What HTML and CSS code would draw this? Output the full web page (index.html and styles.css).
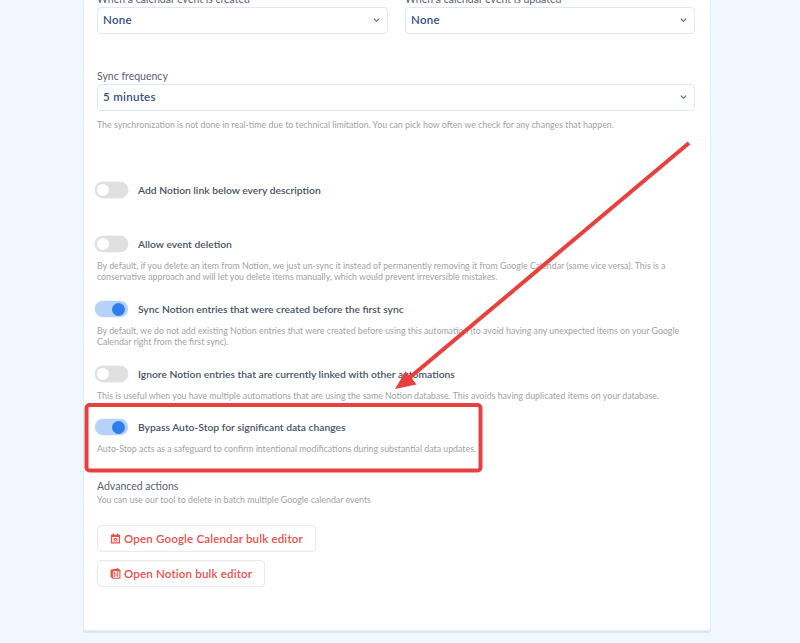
FILE: index.html
```html
<!DOCTYPE html>
<html lang="en">
<head>
<meta charset="utf-8">
<title>Automation settings</title>
<link rel="stylesheet" href="styles.css">
</head>
<body>
<main class="card">
  <div class="two-cols">
    <div class="field">
      <div class="label">When a calendar event is created</div>
      <div class="select"><span>None</span><svg class="chev" viewBox="0 0 8 6"><path d="M1 1.5l3 3 3-3"/></svg></div>
    </div>
    <div class="field">
      <div class="label">When a calendar event is updated</div>
      <div class="select"><span>None</span><svg class="chev" viewBox="0 0 8 6"><path d="M1 1.5l3 3 3-3"/></svg></div>
    </div>
  </div>

  <section class="freq">
    <div class="label">Sync frequency</div>
    <div class="select"><span>5 minutes</span><svg class="chev" viewBox="0 0 8 6"><path d="M1 1.5l3 3 3-3"/></svg></div>
    <p class="hint">The synchronization is not done in real-time due to technical limitation. You can pick how often we check for any changes that happen.</p>
  </section>

  <div class="opt opt-link">
    <div class="row"><span class="toggle"></span><span class="opt-title">Add Notion link below every description</span></div>
  </div>

  <div class="opt opt-delete">
    <div class="row"><span class="toggle"></span><span class="opt-title">Allow event deletion</span></div>
    <p class="hint">By default, if you delete an item from Notion, we just un-sync it instead of permanently removing it from Google Calendar (same vice versa). This is a conservative approach and will let you delete items manually, which would prevent irreversible mistakes.</p>
  </div>

  <div class="opt opt-gap">
    <div class="row"><span class="toggle on"></span><span class="opt-title">Sync Notion entries that were created before the first sync</span></div>
    <p class="hint">By default, we do not add existing Notion entries that were created before using this automation (to avoid having any unexpected items on your Google Calendar right from the first sync).</p>
  </div>

  <div class="opt opt-gap">
    <div class="row"><span class="toggle"></span><span class="opt-title">Ignore Notion entries that are currently linked with other automations</span></div>
    <p class="hint">This is useful when you have multiple automations that are using the same Notion database. This avoids having duplicated items on your database.</p>
  </div>

  <div class="opt opt-bypass">
    <div class="row"><span class="toggle on"></span><span class="opt-title">Bypass Auto-Stop for significant data changes</span></div>
    <p class="hint">Auto-Stop acts as a safeguard to confirm intentional modifications during substantial data updates.</p>
  </div>

  <section class="advanced">
    <div class="label">Advanced actions</div>
    <p class="hint adv-hint">You can use our tool to delete in batch multiple Google calendar events</p>
    <div class="actions">
      <button class="btn" type="button">
        <svg class="ico" viewBox="0 0 12 12"><path class="ico-fill" d="M2.8 .6h1.6v1.2h3.2V.6h1.6v1.2h1.8v9.6H1V1.8h1.8zM2.4 4.4v5.7h7.2V4.4z"/><path class="ico-fill" d="M4 5.4h4v3.8H4z"/><path class="ico-cross" d="M5 6.2l2 2.2M7 6.2L5 8.4"/></svg>
        Open Google Calendar bulk editor
      </button>
      <button class="btn" type="button">
        <svg class="ico ico-n" viewBox="0 0 12 12"><path class="ico-fill" d="M.6 1.8L8.6.4l2.8 1.7v9.5H2.8L.6 9.4z"/><path class="ico-paper" d="M3.2 3.4h7v7.2h-7z"/><path class="ico-line" d="M4.8 9.4V4.8l3.6 4.6V4.4M4 9.4h1.6M7.6 4.4h1.6M4 4.8h1.2"/></svg>
        Open Notion bulk editor
      </button>
    </div>
  </section>
</main>

<svg class="annot" viewBox="0 0 800 643" aria-hidden="true">
  <rect class="annot-box" x="86.5" y="405" width="394" height="65.5" rx="3"/>
  <path class="annot-line" d="M689 143L408 379"/>
  <path class="annot-head" d="M395 389L405.5 371.5 411 377 416.5 384.5z"/>
</svg>
</body>
</html>
```
FILE: styles.css
```css
* { box-sizing: border-box; }
html, body { height: 100%; }
body {
  margin: 0;
  height: 643px;
  overflow: hidden;
  position: relative;
  background: #f0f7ff;
  font-family: "Lato", "Liberation Sans", sans-serif;
  color: #4a5568;
}
.card {
  width: 628px;
  height: 650px;
  margin: -19px 0 0 83px;
  padding: 12px 15px 0 13px;
  background: #fff;
  border: 1px solid #e3ecfa;
  border-top: 0;
  border-radius: 0 0 3px 3px;
  box-shadow: 0 2px 0 #dde5f3;
}
.two-cols {
  display: grid;
  grid-template-columns: 291px 290px;
  column-gap: 17px;
}
.label {
  font-size: 10.5px;
  line-height: 13px;
  color: #59626e;
}
.select {
  height: 27px;
  margin-top: 1px;
  padding: 0 5px 2px;
  display: flex;
  align-items: center;
  justify-content: space-between;
  border: 1px solid #dce7f7;
  border-radius: 4px;
  background: #fff;
  font-size: 11.5px;
  font-weight: 600;
  letter-spacing: .3px;
  color: #34507f;
}
.chev { width: 7px; height: 6px; margin-right: 2px; }
.chev path { fill: none; stroke: #3c5685; stroke-width: 1.2; }
.freq { margin-top: 36px; }
.hint {
  margin: 0;
  font-size: 8.8px;
  line-height: 11px;
  color: #9fa2a8;
}
.freq .hint { margin-top: 8px; }
.opt { display: flex; flex-direction: column; }
.row {
  display: flex;
  align-items: center;
  margin-left: -2px;
  height: 16px;
}
.toggle {
  position: relative;
  flex: none;
  width: 33px;
  height: 16px;
  border-radius: 8px;
  background: #e0e0e0;
  box-shadow: 0 0 0 .5px #e8e8e8;
}
.toggle::after {
  content: "";
  position: absolute;
  top: 2px;
  left: 2px;
  width: 12px;
  height: 12px;
  border-radius: 50%;
  background: #fff;
}
.toggle.on { background: #b5d2fb; }
.toggle.on::after { left: 17px; top: 1.5px; width: 13px; height: 13px; background: #2f7ded; }
.opt-title {
  margin-left: 10px;
  font-size: 10.3px;
  font-weight: 600;
  color: #475464;
}
.opt .hint { margin-top: 8px; }
.opt-link { margin-top: 52px; }
.opt-delete { margin-top: 38px; }
.opt-gap { margin-top: 19px; }
.opt-bypass { margin-top: 18px; }
.advanced { margin-top: 26px; }
.adv-hint { margin-top: 1px; }
.actions {
  margin-top: 20px;
  display: flex;
  flex-direction: column;
  align-items: flex-start;
  gap: 8px;
}
.btn {
  height: 27px;
  padding: 0 12px;
  display: inline-flex;
  align-items: center;
  gap: 3px;
  background: #fff;
  border: 1px solid #e9e9ee;
  border-radius: 4px;
  font: 600 11.5px "Lato", "Liberation Sans", sans-serif;
  letter-spacing: .18px;
  color: #ea4f49;
}
.ico { width: 11px; height: 11px; flex: none; }
.ico-line { fill: none; stroke: #e8504a; stroke-width: 1; }
.ico-cross { fill: none; stroke: #fff; stroke-width: .9; }
.ico-fill { fill: #e8504a; fill-rule: evenodd; }
.ico-paper { fill: #fff; }
.annot {
  position: absolute;
  left: 0;
  top: 0;
  width: 800px;
  height: 643px;
  pointer-events: none;
}
.annot-box { fill: none; stroke: #e8403f; stroke-width: 4; }
.annot-line { fill: none; stroke: #e8403f; stroke-width: 4; }
.annot-head { fill: #e8403f; }
```
